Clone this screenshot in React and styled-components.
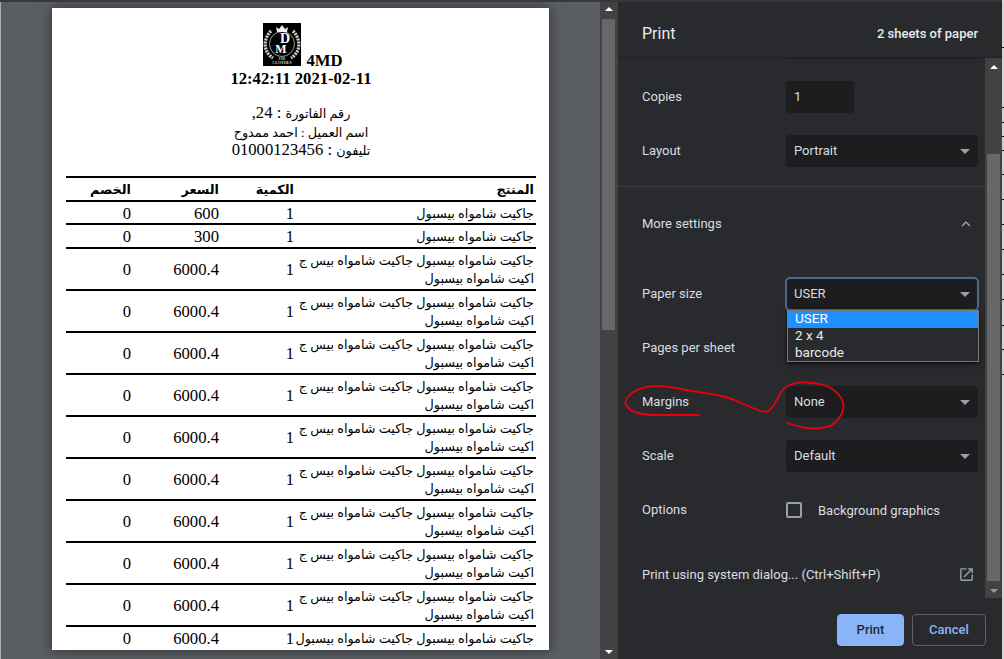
import React from "react";
import styled, { createGlobalStyle } from "styled-components";

const GlobalStyle = createGlobalStyle`
  html, body {
    margin: 0;
    padding: 0;
    background: #cfcfcf;
    overflow: hidden;
  }
`;

const Screen = styled.div`
  position: relative;
  display: flex;
  width: 1004px;
  height: 659px;
  overflow: hidden;
  box-sizing: border-box;
  font-family: Roboto, "Liberation Sans", sans-serif;
`;

const Preview = styled.div`
  width: 600px;
  flex: none;
  box-sizing: border-box;
  padding: 8px 0 0 52px;
  background: #5b5f64;
  border-left: 1px solid #a9abad;
  overflow: hidden;
`;

const Sheet = styled.div`
  width: 497px;
  height: 642px;
  box-sizing: border-box;
  padding: 15px 13px 0 14px;
  margin-left: -1px;
  background: #fff;
  color: #000;
  overflow: hidden;
  box-shadow: 0 0 12px rgba(0, 0, 0, 0.55);
  font: 16.67px/18px "Liberation Serif", "DejaVu Sans", serif;
  text-align: center;
`;

const Brand = styled.div`
  display: flex;
  justify-content: center;
  align-items: flex-end;
  gap: 5px;
  padding-left: 4px;
  font-weight: 700;
  line-height: 15px;

  span {
    margin-bottom: -2px;
  }
`;

const Stamp = styled.div`
  font-weight: 700;
  line-height: 20px;
  padding-top: 3px;
  margin-bottom: 15px;
`;

const InfoLine = styled.div`
  line-height: 18.5px;
`;

const Ar = styled.span`
  font-size: 12.8px;
  line-height: 12px;
`;

const Bill = styled.table`
  width: 470px;
  margin-top: 16px;
  border-collapse: collapse;
  table-layout: fixed;
  direction: rtl;
  border-top: 2px solid #000;

  tr:last-child td {
    border-bottom: 0;
  }
`;

const Cell = styled.td`
  box-sizing: border-box;
  padding: 2px;
  border-bottom: 2px solid #000;
  text-align: right;
  vertical-align: middle;
  width: ${(p) => p.$w || "auto"};
  white-space: nowrap;
  font-weight: ${(p) => (p.$head ? 700 : 400)};
  ${(p) => p.$tight && "padding-bottom: 1px;"}
`;

// the digits sit a pixel lower than the arabic text beside them
const NumCell = styled(Cell)`
  padding-top: 3px;
  padding-bottom: ${(p) => (p.$tight ? 0 : 1)}px;
`;

const Gutter = styled.div`
  position: relative;
  flex: none;
  width: ${(p) => p.$w}px;
  background: #424242;
`;

const GutterThumb = styled.div`
  position: absolute;
  left: 2px;
  right: 3px;
  top: ${(p) => p.$top}px;
  height: ${(p) => p.$h}px;
  background: #686868;
`;

const Arrow = styled.i`
  position: absolute;
  left: 50%;
  margin-left: -4px;
  ${(p) => (p.$down ? "bottom: 5px;" : "top: 7px;")}
  border-left: 4px solid transparent;
  border-right: 4px solid transparent;
  ${(p) => (p.$down ? "border-top" : "border-bottom")}: 4px solid ${(p) => p.$c || "#fff"};
`;

const Sidebar = styled.div`
  position: relative;
  width: 384px;
  flex: none;
  display: flex;
  flex-direction: column;
  background: #292a2d;
  color: #dadce0;
  font-size: 13px;
`;

const Header = styled.div`
  height: 58px;
  flex: none;
  box-sizing: border-box;
  display: flex;
  align-items: center;
  justify-content: space-between;
  padding: 9px 24px 0;
  background: #292a2d;
  border-bottom: 1px solid #202124;
`;

const Title = styled.div`
  font-size: 16px;
  color: #e8eaed;
`;

const Sheets = styled.div`
  font-weight: 500;
  color: #e8eaed;
`;

const Middle = styled.div`
  position: relative;
  flex: none;
  height: 540px;
  display: flex;
`;

const Settings = styled.div`
  flex: 1;
  overflow: hidden;
  padding-top: 12px;
`;

const Row = styled.div`
  height: 54px;
  display: flex;
  align-items: center;
  padding-left: 24px;
`;

const Label = styled.div`
  width: 144px;
  flex: none;
  padding-bottom: 2px;
`;

const Peek = styled.div`
  width: 192px;
  height: 1px;
  margin: -12px 0 11px 168px;
  background: #1d1d1f;
`;

const Control = styled.div`
  position: relative;
  box-sizing: border-box;
  width: ${(p) => p.$w || 192}px;
  height: 32px;
  padding: 0 0 2px 8px;
  display: flex;
  align-items: center;
  justify-content: space-between;
  background: #1d1d1f;
  border-radius: 4px;
  color: #dadce0;
  ${(p) => p.$focus && "outline: 2px solid #4a678c; outline-offset: -1px;"}
`;

const Caret = styled.i`
  margin: 2px 8px 0 auto;
  border-left: 5px solid transparent;
  border-right: 5px solid transparent;
  border-top: 5px solid #9aa0a6;
`;

const Divider = styled.div`
  height: 1px;
  margin-top: 8px;
  background: #3c3d40;
`;

const MoreRow = styled.div`
  height: 73px;
  display: flex;
  align-items: center;
  justify-content: space-between;
  padding: 0 10px 0 24px;
  margin-bottom: 7px;
`;

const Check = styled.div`
  width: 12px;
  height: 12px;
  border: 2px solid #9aa0a6;
  border-radius: 2px;
  margin-right: 16px;
`;

const CheckRow = styled.div`
  display: flex;
  align-items: center;
`;

const SystemRow = styled.div`
  height: 48px;
  margin-top: 13px;
  display: flex;
  align-items: center;
  justify-content: space-between;
  padding: 0 10px 0 24px;
`;

const Track = styled.div`
  position: relative;
  width: 17px;
  flex: none;
  background: #424242;
`;

const TrackThumb = styled.div`
  position: absolute;
  left: 2px;
  right: 2px;
  top: 96px;
  height: 427px;
  background: #686868;
`;

const Footer = styled.div`
  flex: 1;
  display: flex;
  justify-content: flex-end;
  gap: 8px;
  padding: 16px 16px 0 0;
`;

const Button = styled.div`
  box-sizing: border-box;
  height: 32px;
  width: ${(p) => p.$w}px;
  padding-bottom: 2px;
  display: flex;
  align-items: center;
  justify-content: center;
  border-radius: 4px;
  font-weight: 500;
  background: ${(p) => (p.$primary ? "#8ab4f8" : "transparent")};
  color: ${(p) => (p.$primary ? "#292a2d" : "#8ab4f8")};
  border: 1px solid ${(p) => (p.$primary ? "#8ab4f8" : "#5f6368")};
`;

const Dropdown = styled.div`
  position: absolute;
  left: 169px;
  top: 252px;
  width: 192px;
  height: 52px;
  box-sizing: border-box;
  background: #292a2d;
  border: 1px solid #77787a;
  color: #e8eaed;
  font-size: 13.5px;
  box-shadow: 0 2px 5px rgba(0, 0, 0, 0.5);
  z-index: 3;
`;

const Option = styled.div`
  padding-left: 7px;
  height: ${(p) => p.$h}px;
  line-height: ${(p) => p.$h - 2}px;
  background: ${(p) => (p.$on ? "#1e90ff" : "transparent")};
  color: ${(p) => (p.$on ? "#fff" : "#e8eaed")};
`;

const Edge = styled.div`
  flex: 1;
  background: ${(p) =>
    p.$ticks
      .map((y) => `linear-gradient(#111, #111) 0 ${y}px / 100% 1px no-repeat`)
      .join(", ")}, #d4d4d4;
`;

const TopLine = styled.div`
  position: absolute;
  left: 0;
  right: 2px;
  top: 0;
  height: 2px;
  background: #37383b;
  z-index: 4;
`;

const Scribble = styled.svg`
  position: absolute;
  left: 0;
  top: 0;
  z-index: 5;
  pointer-events: none;
`;

const Logo = () => (
  <svg width="38" height="43" viewBox="0 0 38 43">
    <rect width="38" height="43" fill="#000" />
    <path d="M14 9l-1-5 3 2 3-4 3 4 3-2-1 5z" fill="#eee" />
    <path
      d="M8 8C0 16 0 29 10 35M30 8c8 8 8 21-2 27"
      fill="none"
      stroke="#cfcfcf"
      strokeWidth="3.2"
      strokeDasharray="2 1"
    />
    <circle cx="19" cy="21" r="12.5" fill="none" stroke="#fff" strokeWidth="0.6" />
    <text x="22" y="20" fontSize="14" fill="#fff" fontFamily="Liberation Serif" textAnchor="middle">
      D
    </text>
    <text x="18" y="30" fontSize="12" fill="#fff" fontFamily="Liberation Serif" textAnchor="middle">
      M
    </text>
    <text x="19" y="37" fontSize="3" fill="#ccc" fontFamily="Liberation Serif" textAnchor="middle">
      FOR
    </text>
    <text x="19" y="41" fontSize="4" fill="#ccc" fontFamily="Liberation Serif" textAnchor="middle">
      CLOTHES
    </text>
  </svg>
);

const OpenInNew = () => (
  <svg width="17" height="17" viewBox="0 0 24 24" fill="#9aa0a6">
    <path d="M19 19H5V5h7V3H5a2 2 0 00-2 2v14a2 2 0 002 2h14c1.1 0 2-.9 2-2v-7h-2v7zM14 3v2h3.59l-9.83 9.83 1.41 1.41L19 6.41V10h2V3h-7z" />
  </svg>
);

const ChevronUp = () => (
  <svg width="18" height="18" viewBox="0 0 24 24" fill="#9aa0a6">
    <path d="M12 8l-6 6 1.41 1.41L12 10.83l4.59 4.58L18 14z" />
  </svg>
);

const short = "جاكيت شامواه بيسبول";
const longTop = "جاكيت شامواه بيسبول جاكيت شامواه بيس ج";
const longBottom = "اكيت شامواه بيسبول";

const rows = [
  { name: [short], price: "600", tight: true },
  { name: [short], price: "300" },
  ...Array(9).fill({ name: [longTop, longBottom], price: "6000.4" }),
  { name: ["جاكيت شامواه بيسبول جاكيت شامواه بيسبول"], price: "6000.4" },
];

const ticks = [47, 107, 122, 136, 150, 174, 199, 224, 249, 274, 299, 325, 349, 374];

// hand drawn red mark, smoothed through the midpoints
const mark = [
  [699, 415], [673, 415], [647, 415], [633, 412], [626, 406], [625, 400], [632, 392],
  [647, 386], [667, 386], [690, 391], [713, 394], [730, 398], [750, 407], [768, 414],
  [777, 400], [783, 388], [797, 382], [817, 383], [833, 388], [843, 400], [844, 410],
  [838, 420], [830, 427], [810, 429], [797, 426], [787, 423],
];
const markPath = mark.reduce((d, [x, y], i) => {
  if (i === 0) return `M${x} ${y}`;
  if (i === mark.length - 1) return `${d} L${x} ${y}`;
  const [nx, ny] = mark[i + 1];
  return `${d} Q${x} ${y} ${(x + nx) / 2} ${(y + ny) / 2}`;
}, "");

function App() {
  return (
    <Screen>
      <GlobalStyle />
      <TopLine />
      <Preview>
        <Sheet dir="rtl">
          <Brand>
            <span>4MD</span>
            <Logo />
          </Brand>
          <Stamp>2021-02-11 12:42:11</Stamp>
          <InfoLine>
            <Ar>رقم الفاتورة</Ar> : 24,
          </InfoLine>
          <InfoLine>
            <Ar>اسم العميل : احمد ممدوح</Ar>
          </InfoLine>
          <InfoLine>
            <Ar>تليفون</Ar> : 01000123456
          </InfoLine>
          <Bill>
            <tbody>
              <tr>
                <Cell $head $w="240px"><Ar>المنتج</Ar></Cell>
                <Cell $head $w="75px"><Ar>الكمية</Ar></Cell>
                <Cell $head $w="88px"><Ar>السعر</Ar></Cell>
                <Cell $head $w="67px"><Ar>الخصم</Ar></Cell>
              </tr>
              {rows.map((row, i) => (
                <tr key={i}>
                  <Cell $tight={row.tight}>
                    {row.name.map((line) => (
                      <div key={line}><Ar>{line}</Ar></div>
                    ))}
                  </Cell>
                  <NumCell $tight={row.tight}>1</NumCell>
                  <NumCell $tight={row.tight}>{row.price}</NumCell>
                  <NumCell $tight={row.tight}>0</NumCell>
                </tr>
              ))}
            </tbody>
          </Bill>
        </Sheet>
      </Preview>
      <Gutter $w={18}>
        <Arrow />
        <GutterThumb $top={19} $h={311} />
        <Arrow $down />
      </Gutter>
      <Sidebar>
        <Header>
          <Title>Print</Title>
          <Sheets>2 sheets of paper</Sheets>
        </Header>
        <Middle>
          <Settings>
            <Peek />
            <Row>
              <Label>Copies</Label>
              <Control $w={68}>1</Control>
            </Row>
            <Row>
              <Label>Layout</Label>
              <Control>Portrait<Caret /></Control>
            </Row>
            <Divider />
            <MoreRow>
              More settings
              <ChevronUp />
            </MoreRow>
            <Row>
              <Label>Paper size</Label>
              <Control $focus>USER<Caret /></Control>
            </Row>
            <Row>
              <Label>Pages per sheet</Label>
              <Control><Caret /></Control>
            </Row>
            <Row>
              <Label>Margins</Label>
              <Control>None<Caret /></Control>
            </Row>
            <Row>
              <Label>Scale</Label>
              <Control>Default<Caret /></Control>
            </Row>
            <Row>
              <Label>Options</Label>
              <CheckRow>
                <Check />
                Background graphics
              </CheckRow>
            </Row>
            <SystemRow>
              Print using system dialog... (Ctrl+Shift+P)
              <OpenInNew />
            </SystemRow>
          </Settings>
          <Track>
            <Arrow />
            <TrackThumb />
            <Arrow $down $c="#9a9a9a" />
          </Track>
          <Dropdown>
            <Option $on $h={17}>USER</Option>
            <Option $h={17}>2 x 4</Option>
            <Option $h={16}>barcode</Option>
          </Dropdown>
        </Middle>
        <Footer>
          <Button $primary $w={67}>Print</Button>
          <Button $w={74}>Cancel</Button>
        </Footer>
      </Sidebar>
      <Edge $ticks={ticks} />
      <Scribble width="1004" height="659" viewBox="0 0 1004 659">
        <path d={markPath} fill="none" stroke="#e8000f" strokeWidth="1.8" strokeLinecap="round" />
      </Scribble>
    </Screen>
  );
}

export default App;
